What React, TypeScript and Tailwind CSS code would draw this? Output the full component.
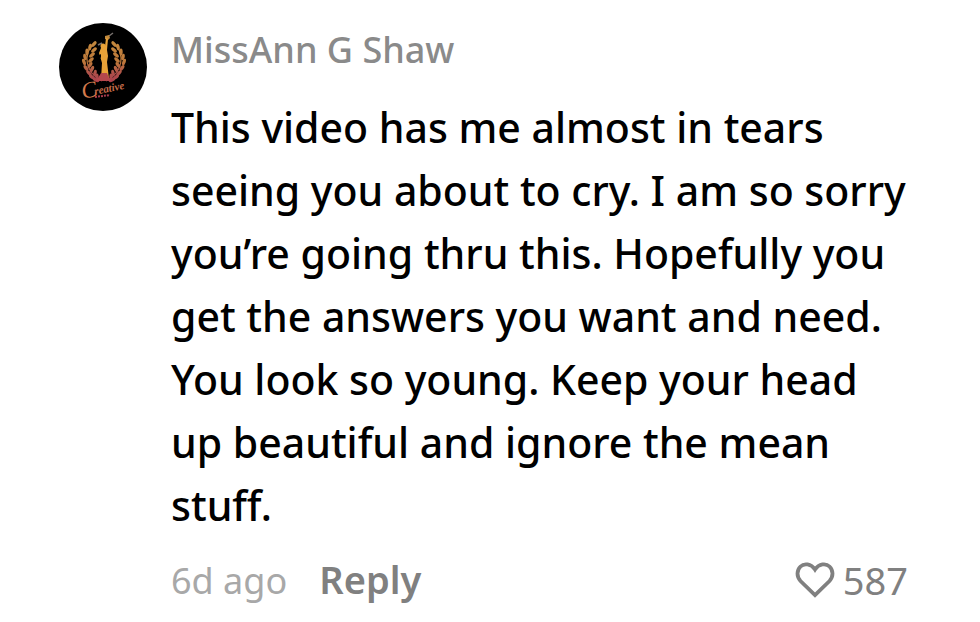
interface Comment {
  author: string;
  text: string;
  age: string;
  likes: number;
}

const comment: Comment = {
  author: 'MissAnn G Shaw',
  text: 'This video has me almost in tears seeing you about to cry. I am so sorry you’re going thru this. Hopefully you get the answers you want and need. You look so young. Keep your head up beautiful and ignore the mean stuff.',
  age: '6d ago',
  likes: 587,
};

// x, y, rotation of each leaf on the left branch, top to bottom
const leaves = [
  [35, 21, 40], [31, 24, 10], [35, 27, 50], [28, 29, 0], [33, 32, 50],
  [26, 34, -10], [32, 37, 45], [25, 39, -20], [31, 42, 35], [27, 45, -35],
  [33, 46, 25], [30, 50, -45], [36, 50, 10], [33, 54, -55], [38, 54, 0], [37, 57, -65],
];

function Branch() {
  return (
    <g>
      <path d="M34 21C24 32 26 49 43 58" fill="none" stroke="url(#gold)" strokeWidth="1.2" />
      {leaves.map(([x, y, r]) => (
        <ellipse key={`${x}-${y}`} cx={x} cy={y} rx="1.7" ry="3.4" fill="url(#gold)" transform={`rotate(${r} ${x} ${y})`} />
      ))}
    </g>
  );
}

function Avatar() {
  return (
    <svg viewBox="0 0 88 88" className="size-[88px] shrink-0 rounded-full bg-black" role="img" aria-label="Creative">
      <defs>
        <linearGradient id="gold" gradientUnits="userSpaceOnUse" x1="0" y1="18" x2="0" y2="60">
          <stop offset="0" stopColor="#c4893e" />
          <stop offset="0.5" stopColor="#bd783a" />
          <stop offset="0.75" stopColor="#b0524a" />
          <stop offset="1" stopColor="#a83c4c" />
        </linearGradient>
      </defs>
      <Branch />
      <g transform="translate(90 0) scale(-1 1)"><Branch /></g>
      <path d="M50 13l4-3M39 22l4-2" stroke="#77706d" strokeWidth="1.5" />
      <path d="M46 13l4-1 1 3-2 2-3-1z" fill="#c28a3c" />
      <circle cx="44" cy="23" r="2.5" fill="#e8a238" />
      <path d="M47 15l2 1-1 11 1 6-1 6 2 17H42l1-16-2-7-1-3 2-5 4-2z" fill="#e8a238" />
      <path d="M42 31l-3 2 3 2z" fill="#000" />
      <path d="M42 50l-3 5-3 3h17l-3-3-2-5z" fill="#b4474c" />
      <text x="24" y="76" fill="#d47a4c" fontSize="23" className="font-['Liberation_Serif',serif] italic" transform="rotate(-12 24 76)">C</text>
      <text x="36" y="72" fill="#c46c4a" fontSize="11" className="font-['Liberation_Serif',serif] font-bold italic" transform="rotate(-12 36 72)">reative</text>
      <path d="M36 74l15-2" stroke="#a83c4c" strokeWidth="2" strokeDasharray="2 1" />
    </svg>
  );
}

export default function App() {
  return (
    <article className="flex items-start gap-6 bg-white py-[23px] pl-[59px] pr-[72px] font-['Noto_Sans',sans-serif]">
      <Avatar />
      <div className="min-w-0 flex-1">
        <h2 className="text-[36px] leading-[54px] font-medium text-[#8a8a8a]">{comment.author}</h2>
        <p className="mt-[19px] text-[41px] leading-[63px] font-medium text-black">{comment.text}</p>
        <footer className="mt-[15px] flex items-center text-[38px] leading-[54px] text-[#808080]">
          <div className="flex items-baseline gap-8">
            <time className="text-[36px] text-[#a8a8a8]">{comment.age}</time>
            <button type="button" className="font-semibold">Reply</button>
          </div>
          <button type="button" className="ml-auto flex items-center gap-2" aria-label={`Like, ${comment.likes} likes`}>
            <svg viewBox="0 0 40 36" className="h-9 w-10" fill="none" stroke="currentColor" strokeWidth="3.8" strokeLinejoin="miter">
              <path d="M20 7.5C16 1.5 9 1 5.5 4.5C1.5 8.5 1.5 14.5 5.5 19L20 33L34.5 19C38.5 14.5 38.5 8.5 34.5 4.5C31 1 24 1.5 20 7.5Z" />
            </svg>
            <span>{comment.likes}</span>
          </button>
        </footer>
      </div>
    </article>
  );
}
